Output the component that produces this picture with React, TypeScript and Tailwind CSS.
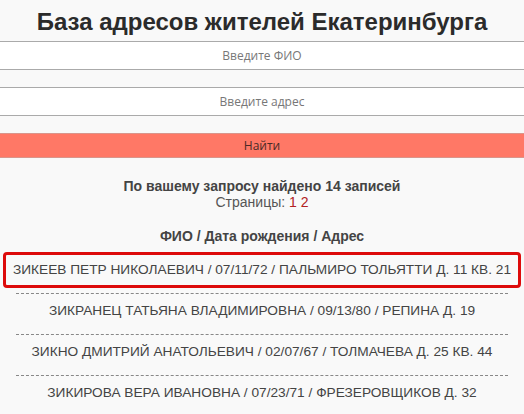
import React from "react";

const rows = [
  "ЗИКЕЕВ ПЕТР НИКОЛАЕВИЧ / 07/11/72 / ПАЛЬМИРО ТОЛЬЯТТИ Д. 11 КВ. 21",
  "ЗИКРАНЕЦ ТАТЬЯНА ВЛАДИМИРОВНА / 09/13/80 / РЕПИНА Д. 19",
  "ЗИКНО ДМИТРИЙ АНАТОЛЬЕВИЧ / 02/07/67 / ТОЛМАЧЕВА Д. 25 КВ. 44",
  "ЗИКИРОВА ВЕРА ИВАНОВНА / 07/23/71 / ФРЕЗЕРОВЩИКОВ Д. 32",
];

export default function App() {
  return (
    <div className="min-h-[414px] w-[524px] bg-[#f9f9f9] text-[#444] overflow-hidden" style={{ fontFamily: '"Liberation Sans", Arial, sans-serif' }}>
      <h1 className="h-[41px] flex items-center justify-center text-[24px] font-bold text-[#2b2b2b] pt-[2px]">
        База адресов жителей Екатеринбурга
      </h1>
      <div className="h-[29px] bg-white border-y border-[#aaa] flex items-center justify-center text-[12px] text-[#777]" style={{ fontFamily: '"Open Sans", "DejaVu Sans", sans-serif' }}>
        Введите ФИО
      </div>
      <div className="mt-[17px] h-[29px] bg-white border-y border-[#aaa] flex items-center justify-center text-[12px] text-[#777]" style={{ fontFamily: '"Open Sans", "DejaVu Sans", sans-serif' }}>
        Введите адрес
      </div>
      <div className="mt-[17px] h-[25px] bg-[#ff7866] border-y border-[#d9958b] flex items-center justify-center text-[12px] text-[#4a2a26]" style={{ fontFamily: '"Open Sans", "DejaVu Sans", sans-serif' }}>
        Найти
      </div>
      <div className="mt-[20px] text-center text-[14px] font-bold text-[#444] leading-[16px]">
        По вашему запросу найдено 14 записей
      </div>
      <div className="text-center text-[14px] text-[#555] leading-[16px]">
        Страницы: <span className="text-[#b22222]">1</span> <span className="text-[#b22222]">2</span>
      </div>
      <div className="mt-[18px] text-center text-[14px] font-bold text-[#444] leading-[16px]">
        ФИО / Дата рождения / Адрес
      </div>
      <div className="mt-[8px]">
        {rows.map((r, i) =>
          i === 0 ? (
            <div key={i} className="mx-[3px] h-[36px] border-[3px] border-[#dd0b0b] rounded-[4px] flex items-center justify-center text-[13.7px] text-[#444] whitespace-nowrap">
              {r}
            </div>
          ) : (
            <div key={i}>
              <div className="mt-[5px] mx-[16px] border-t border-dashed border-[#888]" />
              <div className="h-[35px] flex items-center justify-center text-[13.7px] text-[#444] whitespace-nowrap">
                {r}
              </div>
            </div>
          )
        )}
      </div>
    </div>
  );
}
